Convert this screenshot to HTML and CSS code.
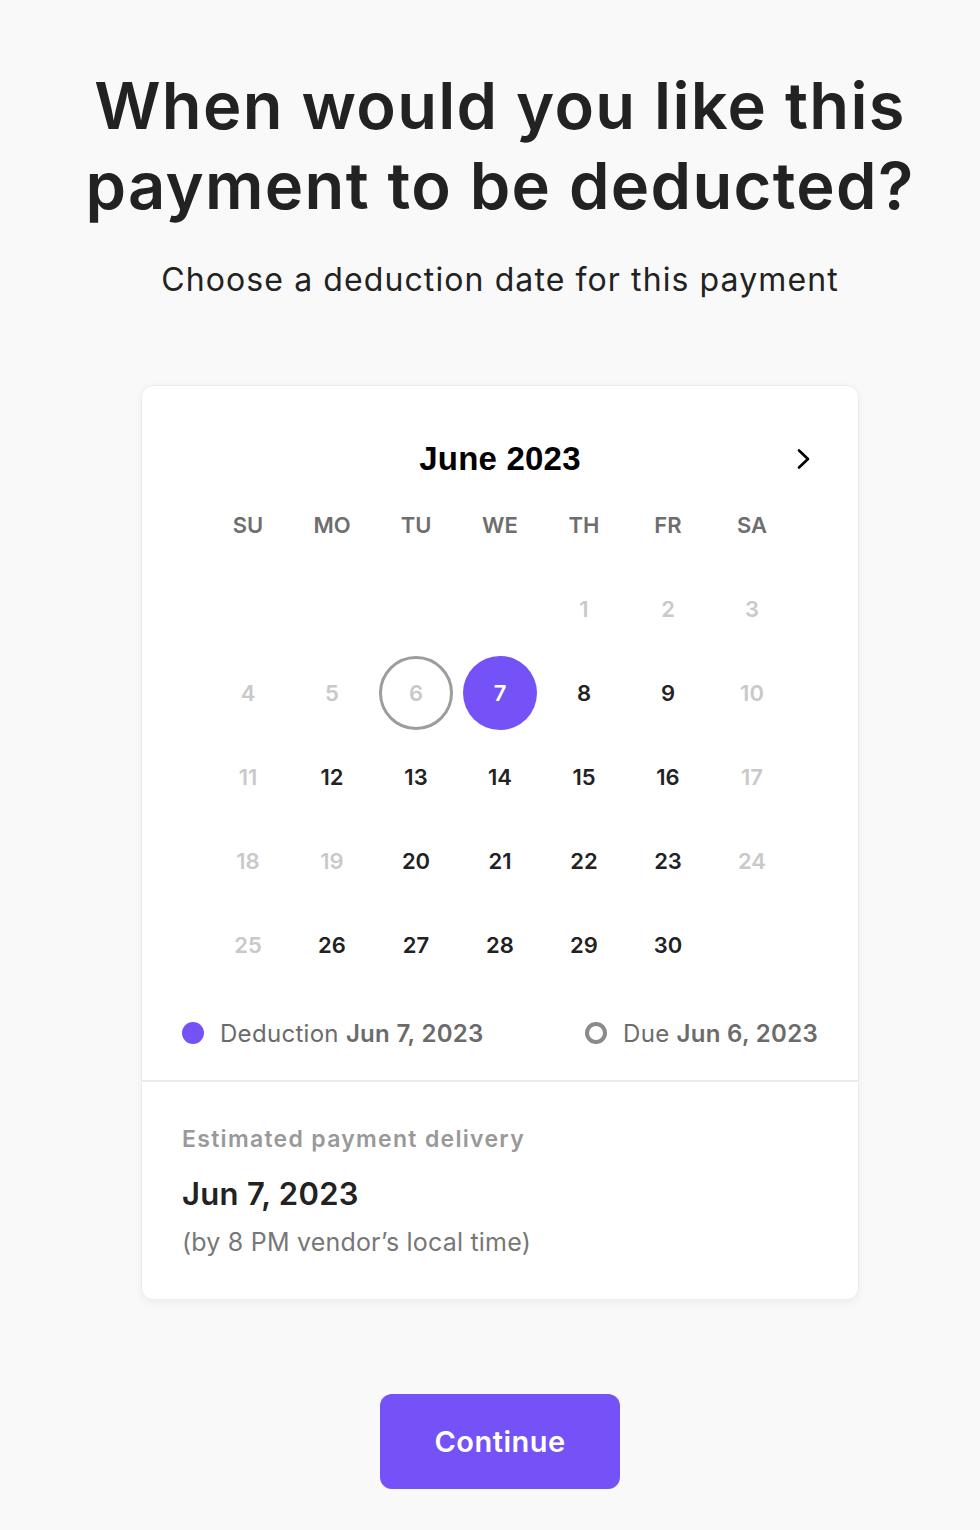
FILE: index.html
```html
<!DOCTYPE html>
<html lang="en">
<head>
<meta charset="utf-8">
<title>Deduction date</title>
<link rel="stylesheet" href="styles.css">
</head>
<body>
<div class="page">
  <h1 class="title">When would you like this<br>payment to be deducted?</h1>
  <p class="subtitle">Choose a deduction date for this payment</p>

  <section class="card">
    <div class="calendar">
      <div class="cal-head">
        <span class="month">June 2023</span>
        <button class="next" aria-label="Next month">
          <svg width="16" height="22" viewBox="0 0 16 22"><path d="M3 2.5 L12 11 L3 19.5" fill="none" stroke="#000" stroke-width="2.6" stroke-linecap="round" stroke-linejoin="round"/></svg>
        </button>
      </div>
      <div class="grid">
        <div class="wd">SU</div><div class="wd">MO</div><div class="wd">TU</div><div class="wd">WE</div><div class="wd">TH</div><div class="wd">FR</div><div class="wd">SA</div>

        <div class="day"></div><div class="day"></div><div class="day"></div><div class="day"></div>
        <div class="day off">1</div><div class="day off">2</div><div class="day off">3</div>

        <div class="day off">4</div><div class="day off">5</div>
        <div class="day off"><span class="due">6</span></div>
        <div class="day"><span class="sel">7</span></div>
        <div class="day">8</div><div class="day">9</div><div class="day off">10</div>

        <div class="day off">11</div><div class="day">12</div><div class="day">13</div><div class="day">14</div><div class="day">15</div><div class="day">16</div><div class="day off">17</div>

        <div class="day off">18</div><div class="day off">19</div><div class="day">20</div><div class="day">21</div><div class="day">22</div><div class="day">23</div><div class="day off">24</div>

        <div class="day off">25</div><div class="day">26</div><div class="day">27</div><div class="day">28</div><div class="day">29</div><div class="day">30</div><div class="day"></div>
      </div>
      <div class="legend">
        <div class="leg"><span class="dot"></span><span>Deduction <b>Jun 7, 2023</b></span></div>
        <div class="leg"><span class="ring"></span><span>Due <b>Jun 6, 2023</b></span></div>
      </div>
    </div>
    <div class="delivery">
      <div class="del-label">Estimated payment delivery</div>
      <div class="del-date">Jun 7, 2023</div>
      <div class="del-note">(by 8 PM vendor’s local time)</div>
    </div>
  </section>

  <div class="actions">
    <button class="continue">Continue</button>
  </div>
</div>
</body>
</html>
```

FILE: styles.css
```css
* { box-sizing: border-box; }
html, body { margin: 0; padding: 0; }
body {
  background: #f9f9f9;
  font-family: Inter, "Noto Sans", sans-serif;
  color: #222;
  overflow-x: hidden;
}
.page {
  padding: 66px 0 40px 20px;
  display: flex;
  flex-direction: column;
  align-items: center;
}
.title {
  margin: 0;
  font-size: 65px;
  line-height: 80px;
  font-weight: 600;
  text-align: center;
  color: #222;
  letter-spacing: 1.3px;
  white-space: nowrap;
}
.subtitle {
  margin: 34px 0 0;
  font-size: 32px;
  line-height: 40px;
  font-weight: 400;
  color: #222;
  text-align: center;
  letter-spacing: 1.1px;
}
.card {
  margin-top: 85px;
  width: 718px;
  background: #fff;
  border: 1px solid #ececec;
  border-radius: 12px;
  box-shadow: 0 3px 10px rgba(0,0,0,0.05);
}
.calendar {
  padding: 53px 40px 32px;
}
.cal-head {
  position: relative;
  height: 40px;
  margin-bottom: 4px;
  display: flex;
  justify-content: center;
  align-items: center;
}
.month {
  font-family: "Liberation Sans", Arial, sans-serif;
  font-weight: 700;
  font-size: 33px;
  color: #000;
  letter-spacing: 0.2px;
}
.next {
  position: absolute;
  right: 6px;
  top: 9px;
  background: none;
  border: 0;
  padding: 0;
  width: 16px;
  height: 22px;
}
.grid {
  width: 588px;
  margin: 0 auto;
  display: grid;
  grid-template-columns: repeat(7, 84px);
  grid-auto-rows: 84px;
}
.wd {
  display: flex;
  align-items: center;
  justify-content: center;
  font-size: 22px;
  font-weight: 600;
  color: #6e6e6e;
}
.day {
  display: flex;
  align-items: center;
  justify-content: center;
  font-size: 22px;
  font-weight: 600;
  color: #222;
}
.day.off { color: #c9c9c9; }
.sel, .due {
  width: 74px;
  height: 74px;
  border-radius: 50%;
  display: flex;
  align-items: center;
  justify-content: center;
}
.sel { background: #7551f8; color: #fff; }
.due { border: 3px solid #9d9d9d; color: #c9c9c9; }
.legend {
  margin-top: 31px;
  height: 30px;
  display: flex;
  justify-content: space-between;
  align-items: center;
}
.leg {
  display: flex;
  align-items: center;
  gap: 16px;
  font-size: 24px;
  letter-spacing: 0.3px;
  color: #6b6b6b;
}
.leg b { font-weight: 600; color: #6b6b6b; }
.dot {
  width: 22px; height: 22px; border-radius: 50%;
  background: #7551f8;
}
.ring {
  width: 22px; height: 22px; border-radius: 50%;
  border: 4px solid #8a8a8a;
}
.delivery {
  border-top: 2px solid #e9e9e9;
  padding: 42px 40px 41px;
}
.del-label {
  font-size: 23px;
  line-height: 30px;
  font-weight: 600;
  color: #999;
  letter-spacing: 1.3px;
}
.del-date {
  margin-top: 23px;
  font-size: 31px;
  line-height: 34px;
  font-weight: 600;
  color: #222;
  letter-spacing: 0.3px;
}
.del-note {
  margin-top: 15px;
  font-size: 25px;
  line-height: 32px;
  color: #777;
  letter-spacing: 0.2px;
}
.actions {
  margin-top: 94px;
}
.continue {
  width: 240px;
  height: 95px;
  border: 0;
  border-radius: 12px;
  background: #7551f8;
  color: #fff;
  font-family: Inter, sans-serif;
  font-size: 29px;
  font-weight: 600;
  letter-spacing: 0.5px;
}
```
